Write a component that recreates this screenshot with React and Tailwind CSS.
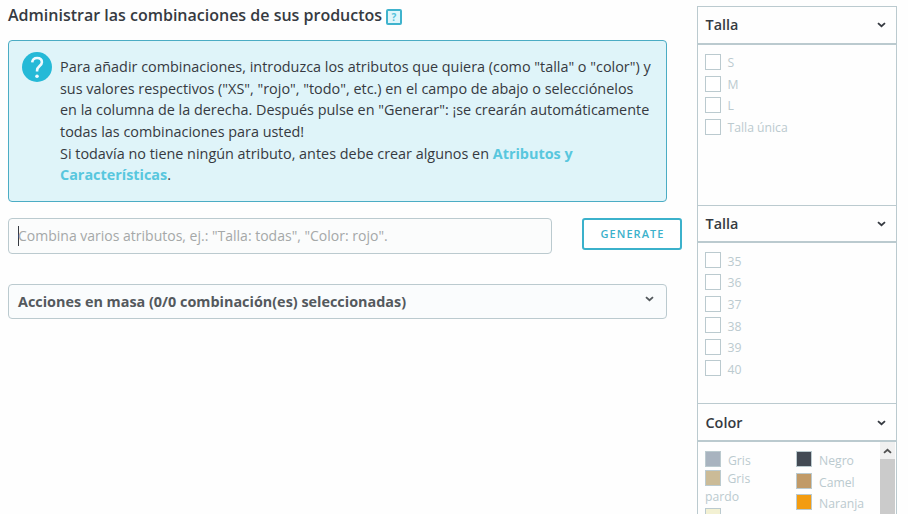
const Chevron = ({ className = "" }) => (
  <svg className={`shrink-0 ${className}`} width="9" height="6" viewBox="0 0 9 6" fill="none" stroke="currentColor" strokeWidth="1.8">
    <path d="M1 1.1 L4.5 4.2 L8 1.1" />
  </svg>
);

const GroupHeader = ({ title, className }) => (
  <div className={`flex shrink-0 items-center justify-between border-b-2 border-[#bbcacf] pl-[7.5px] pr-[10px] text-[14.4px] font-semibold text-[#363a41] ${className}`}>
    <span>{title}</span>
    <Chevron />
  </div>
);

const CheckRow = ({ label }) => (
  <label className="flex h-[21.6px] items-start">
    <span className="h-4 w-4 shrink-0 border border-[#bbcacf] bg-white" />
    <span className="ml-[6.5px] pt-[1.3px] text-[12.2px] leading-[16px] text-[#bbcacf]">{label}</span>
  </label>
);

const Swatch = ({ color }) => (
  <span className={`inline-block h-4 w-4 shrink-0 border border-[#bbcacf] ${color}`} />
);

const ColorRow = ({ color, label }) => (
  <div className="flex h-[21.5px] items-start">
    <Swatch color={color} />
    <span className="ml-[7px] pt-[2px] text-[12.2px] leading-[16px] text-[#bbcacf]">{label}</span>
  </div>
);

export default function App() {
  return (
    <div className="flex h-[514px] w-[908px] overflow-hidden bg-[#fefefe] font-['Open_Sans','Noto_Sans',sans-serif] text-[#363a41]">
      <main className="flex w-[697px] shrink-0 flex-col pl-2">
        <div className="flex h-10 shrink-0 items-start pt-[4px]">
          <h2 className="w-[374px] whitespace-nowrap text-[16px] font-semibold leading-[22px]">
            Administrar las combinaciones de sus productos
          </h2>
          <span className="ml-[4px] mt-[5px] flex h-4 w-4 items-center justify-center rounded-[2px] border-2 border-[#3fb3cd] bg-[#e0f6fb] text-[10px] font-bold leading-none text-[#55c2db]">
            ?
          </span>
        </div>

        <section className="flex h-[162px] w-[659px] shrink-0 rounded-[4px] border border-[#4bacc4] bg-[#dff4f9] pl-[13px] pt-[11px]">
          <svg className="shrink-0" width="30" height="30" viewBox="0 0 30 30">
            <circle cx="15" cy="15" r="15" fill="#25b9d7" />
            <path d="M10.2 10.4 C10.5 7.4 12.4 6 15.1 6 C18 6 19.9 7.7 19.9 10.2 C19.9 13.8 15.1 14.2 15.1 18.2 V19.6" fill="none" stroke="#eefaff" strokeWidth="2.6" />
            <circle cx="15" cy="24.2" r="1.8" fill="#eefaff" />
          </svg>
          <p className="ml-[8px] mt-[4.3px] whitespace-nowrap text-[14.4px] leading-[21.6px]">
            Para añadir combinaciones, introduzca los atributos que quiera (como "talla" o "color") y<br />
            sus valores respectivos ("XS", "rojo", "todo", etc.) en el campo de abajo o selecciónelos<br />
            en la columna de la derecha. Después pulse en "Generar": ¡se crearán automáticamente<br />
            todas las combinaciones para usted!<br />
            Si todavía no tiene ningún atributo, antes debe crear algunos en{" "}
            <b className="font-bold text-[#58c7de]">Atributos y<br />Características</b>.
          </p>
        </section>

        <div className="mt-4 flex shrink-0 items-start">
          <div className="flex h-9 w-[544px] items-center rounded-[4px] border border-[#bbcacf] bg-[#fbfcfc] pb-px pl-[9px] text-[14px] text-[#a5a8a8]">
            <span className="h-5 w-px shrink-0 bg-[#363a41]" />
            <span className="-ml-px whitespace-nowrap">Combina varios atributos, ej.: "Talla: todas", "Color: rojo".</span>
          </div>
          <button className="ml-[30px] flex h-8 w-[100px] items-center justify-center rounded-[3px] border-2 border-[#3bb1cb] bg-white pl-px text-[11px] font-semibold tracking-[1.05px] text-[#3bb1cb]">
            GENERATE
          </button>
        </div>

        <div className="mt-[30px] flex h-[35px] w-[659px] shrink-0 items-center justify-between rounded-[4px] border border-[#bbcacf] bg-[#fafcfd] pl-[9px] pr-[12px] text-[14.4px] font-bold text-[#54595d]">
          <span>Acciones en masa (0/0 combinación(es) seleccionadas)</span>
          <Chevron className="mb-[6px]" />
        </div>
      </main>

      <aside className="mt-[6px] flex h-[520px] w-[200px] shrink-0 flex-col border border-[#bbcacf]">
        <GroupHeader title="Talla" className="h-[38px] pb-px" />
        <div className="h-[160px] shrink-0 pl-[7px] pt-[9px]">
          {["S", "M", "L", "Talla única"].map((t) => <CheckRow key={t} label={t} />)}
        </div>
        <div className="flex shrink-0 flex-col border-t border-[#bbcacf]">
          <GroupHeader title="Talla" className="h-[37px]" />
          <div className="h-[160px] pl-[7px] pt-[9.45px]">
            {["35", "36", "37", "38", "39", "40"].map((t) => <CheckRow key={t} label={t} />)}
          </div>
        </div>
        <div className="flex shrink-0 flex-col border-t border-[#bbcacf]">
          <GroupHeader title="Color" className="h-[38px] pt-px" />
          <div className="flex h-[80px]">
            <div className="w-[91px] shrink-0 pl-[7px] pt-[9px]">
              <div className="h-[19px]"><ColorRow color="bg-[#a8b3bf]" label="Gris" /></div>
              <div className="flex h-[17px] items-start">
                <Swatch color="bg-[#cbbb97]" />
                <span className="ml-[6.5px] text-[12.2px] leading-[17px] text-[#bbcacf]">Gris</span>
              </div>
              <div className="h-5 text-[12.2px] leading-[20px] text-[#bbcacf]">pardo</div>
              <div className="flex h-4 pt-px"><Swatch color="bg-[#f3f1d3]" /></div>
            </div>
            <div className="flex-1 pl-[7px] pt-[9px]">
              <ColorRow color="bg-[#434a54]" label="Negro" />
              <ColorRow color="bg-[#c19a67]" label="Camel" />
              <ColorRow color="bg-[#f39c11]" label="Naranja" />
            </div>
            <div className="mr-px flex w-[15px] shrink-0 flex-col bg-[#cbcbcb]">
              <div className="flex h-[17px] items-center justify-center bg-[#f0f0f0] text-[#505050]">
                <Chevron className="rotate-180" />
              </div>
            </div>
          </div>
        </div>
      </aside>
    </div>
  );
}
